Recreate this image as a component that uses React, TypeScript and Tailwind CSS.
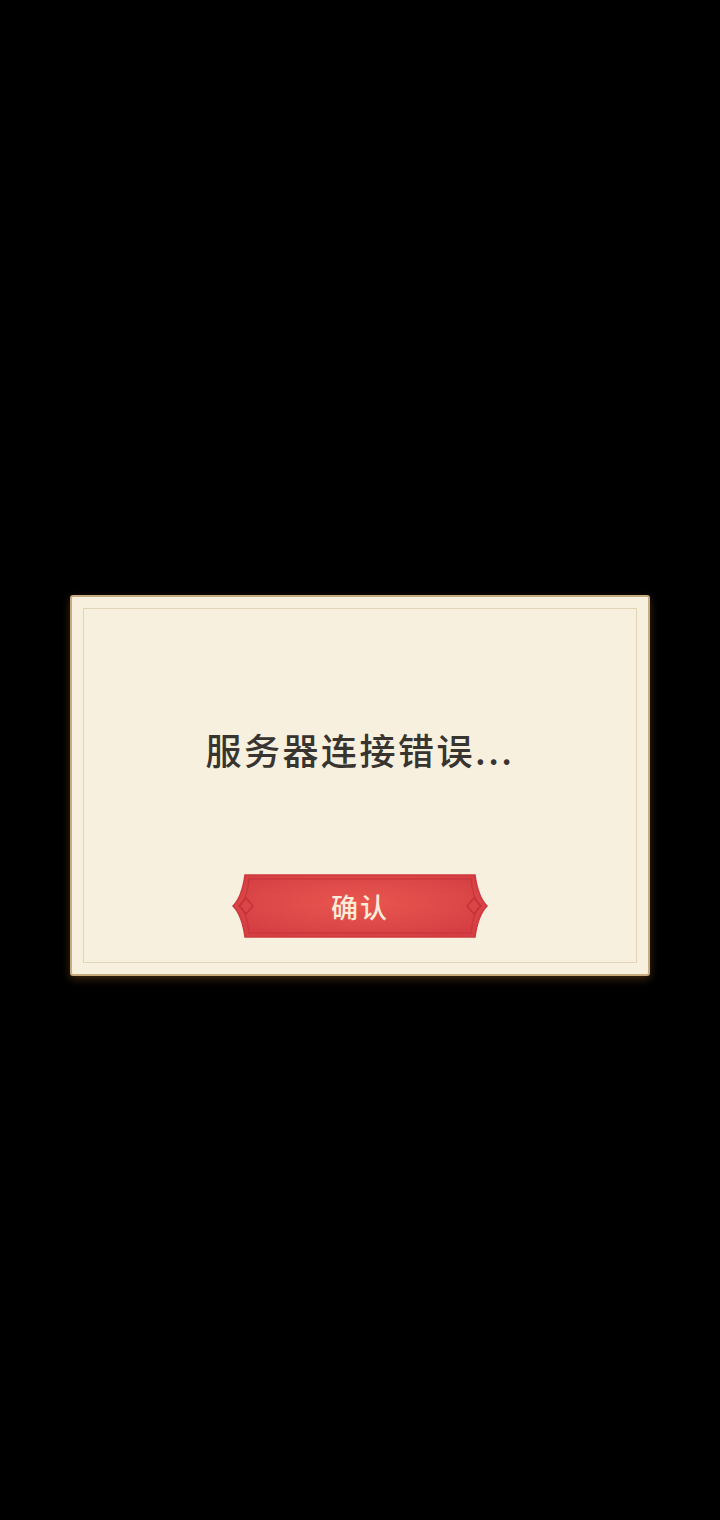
import type { FC } from "react";

const FONT = "font-['Noto_Sans_CJK_SC','Noto_Sans',sans-serif]";

// Red ribbon-shaped confirm button: the shape is a drawing, the label stays text.
const ConfirmButton: FC<{ label: string }> = ({ label }) => (
  <button type="button" className="relative flex h-[66px] w-[256px] items-center justify-center">
    <svg className="absolute inset-0" width="256" height="66" viewBox="0 0 256 66">
      <defs>
        <radialGradient id="btnFill" cx="50%" cy="45%" r="60%">
          <stop offset="0%" stopColor="#e9574f" />
          <stop offset="100%" stopColor="#d53f44" />
        </radialGradient>
      </defs>
      <path
        d="M13,2 L243,2 Q246,24 255,33 Q246,42 243,64 L13,64 Q10,42 1,33 Q10,24 13,2 Z"
        fill="url(#btnFill)"
        stroke="#cd383e"
        strokeWidth="1.5"
      />
      <path
        d="M17,6 L239,6 Q241,26 248,33 Q241,40 239,60 L17,60 Q15,40 8,33 Q15,26 17,6 Z"
        fill="none"
        stroke="#c6343a"
        strokeWidth="1.5"
        opacity="0.75"
      />
      <path d="M7,33 L14,25 L21,33 L14,41 Z" fill="none" stroke="#c3323a" strokeWidth="1.5" />
      <path d="M235,33 L242,25 L249,33 L242,41 Z" fill="none" stroke="#c3323a" strokeWidth="1.5" />
    </svg>
    <span className={`relative text-[27px] font-medium leading-none tracking-[2px] text-[#fcecd8] ${FONT}`}>
      {label}
    </span>
  </button>
);

export default function App() {
  return (
    <div className="flex h-[1520px] w-full items-start justify-center bg-black pt-[595px]">
      <div className="flex h-[381px] w-[580px] flex-col rounded-[3px] border-2 border-[#c8ab7d] bg-[#f7f0df] p-[11px] shadow-[0_3px_8px_rgba(110,70,30,0.55)]">
        <div className="flex flex-1 flex-col items-center border border-[#e2d4b7] pt-[120px]">
          <p className={`h-[40px] text-[36px] font-medium leading-[40px] tracking-[2.5px] text-[#383430] ${FONT}`}>
            服务器连接错误...
          </p>
          <div className="mt-[104px]">
            <ConfirmButton label="确认" />
          </div>
        </div>
      </div>
    </div>
  );
}
